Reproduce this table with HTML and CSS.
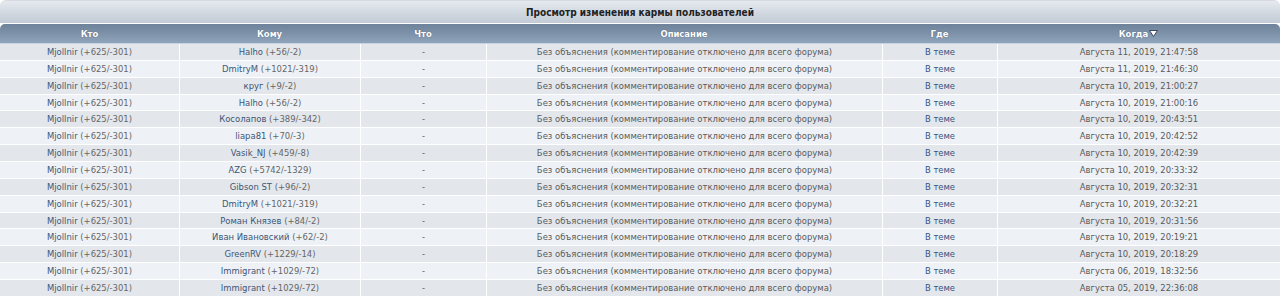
FILE: index.html
```html
<!DOCTYPE html>
<html lang="ru">
<head>
<meta charset="utf-8">
<title>Просмотр изменения кармы пользователей</title>
<link rel="stylesheet" href="styles.css">
</head>
<body>
<div class="panel">
  <div class="cap">Просмотр изменения кармы пользователей</div>
  <table class="karma">
    <colgroup>
      <col class="c1"><col class="c2"><col class="c3"><col class="c4"><col class="c5"><col class="c6">
    </colgroup>
    <thead>
      <tr>
        <th>Кто</th><th>Кому</th><th>Что</th><th>Описание</th><th>Где</th>
        <th>Когда<svg class="sort" width="9" height="7" viewBox="0 0 9 7"><path d="M0.5 0.5 H8.5 L4.5 6.5 Z" fill="#fff" stroke="#3a4a5e" stroke-width="1"/></svg></th>
      </tr>
    </thead>
    <tbody>
      <tr><td><a class="u">Mjollnir</a> <span class="n">(+625/-301)</span></td><td><a class="u">Halho</a> <span class="n">(+56/-2)</span></td><td class="d">-</td><td class="d">Без объяснения (комментирование отключено для всего форума)</td><td><a class="l">В теме</a></td><td class="d">Августа 11, 2019, 21:47:58</td></tr>
      <tr><td><a class="u">Mjollnir</a> <span class="n">(+625/-301)</span></td><td><a class="u">DmitryM</a> <span class="n">(+1021/-319)</span></td><td class="d">-</td><td class="d">Без объяснения (комментирование отключено для всего форума)</td><td><a class="l">В теме</a></td><td class="d">Августа 11, 2019, 21:46:30</td></tr>
      <tr><td><a class="u">Mjollnir</a> <span class="n">(+625/-301)</span></td><td><a class="u">круг</a> <span class="n">(+9/-2)</span></td><td class="d">-</td><td class="d">Без объяснения (комментирование отключено для всего форума)</td><td><a class="l">В теме</a></td><td class="d">Августа 10, 2019, 21:00:27</td></tr>
      <tr><td><a class="u">Mjollnir</a> <span class="n">(+625/-301)</span></td><td><a class="u">Halho</a> <span class="n">(+56/-2)</span></td><td class="d">-</td><td class="d">Без объяснения (комментирование отключено для всего форума)</td><td><a class="l">В теме</a></td><td class="d">Августа 10, 2019, 21:00:16</td></tr>
      <tr><td><a class="u">Mjollnir</a> <span class="n">(+625/-301)</span></td><td><a class="u">Косолапов</a> <span class="n">(+389/-342)</span></td><td class="d">-</td><td class="d">Без объяснения (комментирование отключено для всего форума)</td><td><a class="l">В теме</a></td><td class="d">Августа 10, 2019, 20:43:51</td></tr>
      <tr><td><a class="u">Mjollnir</a> <span class="n">(+625/-301)</span></td><td><a class="u">liapa81</a> <span class="n">(+70/-3)</span></td><td class="d">-</td><td class="d">Без объяснения (комментирование отключено для всего форума)</td><td><a class="l">В теме</a></td><td class="d">Августа 10, 2019, 20:42:52</td></tr>
      <tr><td><a class="u">Mjollnir</a> <span class="n">(+625/-301)</span></td><td><a class="u">Vasik_NJ</a> <span class="n">(+459/-8)</span></td><td class="d">-</td><td class="d">Без объяснения (комментирование отключено для всего форума)</td><td><a class="l">В теме</a></td><td class="d">Августа 10, 2019, 20:42:39</td></tr>
      <tr><td><a class="u">Mjollnir</a> <span class="n">(+625/-301)</span></td><td><a class="u">AZG</a> <span class="n">(+5742/-1329)</span></td><td class="d">-</td><td class="d">Без объяснения (комментирование отключено для всего форума)</td><td><a class="l">В теме</a></td><td class="d">Августа 10, 2019, 20:33:32</td></tr>
      <tr><td><a class="u">Mjollnir</a> <span class="n">(+625/-301)</span></td><td><a class="u">Gibson ST</a> <span class="n">(+96/-2)</span></td><td class="d">-</td><td class="d">Без объяснения (комментирование отключено для всего форума)</td><td><a class="l">В теме</a></td><td class="d">Августа 10, 2019, 20:32:31</td></tr>
      <tr><td><a class="u">Mjollnir</a> <span class="n">(+625/-301)</span></td><td><a class="u">DmitryM</a> <span class="n">(+1021/-319)</span></td><td class="d">-</td><td class="d">Без объяснения (комментирование отключено для всего форума)</td><td><a class="l">В теме</a></td><td class="d">Августа 10, 2019, 20:32:21</td></tr>
      <tr><td><a class="u">Mjollnir</a> <span class="n">(+625/-301)</span></td><td><a class="u">Роман Князев</a> <span class="n">(+84/-2)</span></td><td class="d">-</td><td class="d">Без объяснения (комментирование отключено для всего форума)</td><td><a class="l">В теме</a></td><td class="d">Августа 10, 2019, 20:31:56</td></tr>
      <tr><td><a class="u">Mjollnir</a> <span class="n">(+625/-301)</span></td><td><a class="u">Иван Ивановский</a> <span class="n">(+62/-2)</span></td><td class="d">-</td><td class="d">Без объяснения (комментирование отключено для всего форума)</td><td><a class="l">В теме</a></td><td class="d">Августа 10, 2019, 20:19:21</td></tr>
      <tr><td><a class="u">Mjollnir</a> <span class="n">(+625/-301)</span></td><td><a class="u">GreenRV</a> <span class="n">(+1229/-14)</span></td><td class="d">-</td><td class="d">Без объяснения (комментирование отключено для всего форума)</td><td><a class="l">В теме</a></td><td class="d">Августа 10, 2019, 20:18:29</td></tr>
      <tr><td><a class="u">Mjollnir</a> <span class="n">(+625/-301)</span></td><td><a class="u">Immigrant</a> <span class="n">(+1029/-72)</span></td><td class="d">-</td><td class="d">Без объяснения (комментирование отключено для всего форума)</td><td><a class="l">В теме</a></td><td class="d">Августа 06, 2019, 18:32:56</td></tr>
      <tr><td><a class="u">Mjollnir</a> <span class="n">(+625/-301)</span></td><td><a class="u">Immigrant</a> <span class="n">(+1029/-72)</span></td><td class="d">-</td><td class="d">Без объяснения (комментирование отключено для всего форума)</td><td><a class="l">В теме</a></td><td class="d">Августа 05, 2019, 22:36:08</td></tr>
    </tbody>
  </table>
</div>
</body>
</html>
```

FILE: styles.css
```css
html, body {
  margin: 0;
  padding: 0;
  background: #fff;
}
body {
  font-family: "DejaVu Sans Condensed", "DejaVu Sans", Verdana, sans-serif;
  font-stretch: condensed;
  font-size: 9.4px;
  color: #555;
}
.panel {
  width: 1280px;
}
.cap {
  height: 23px;
  line-height: 24px;
  text-align: center;
  font-weight: bold;
  font-size: 10px;
  color: #222;
  background: linear-gradient(to bottom, #e6eaef 0%, #d2d9e1 50%, #c2cbd5 100%);
  border-radius: 6px 6px 0 0;
  border-top: 1px solid #d5dbe2;
  box-sizing: border-box;
}
.karma {
  width: 100%;
  border-collapse: separate;
  border-spacing: 0;
  table-layout: fixed;
  margin-top: 1px;
}
.c1 { width: 179px; }
.c2 { width: 181px; }
.c3 { width: 126px; }
.c4 { width: 396px; }
.c5 { width: 115px; }
.c6 { width: 283px; }
.karma th {
  height: 19px;
  padding: 0;
  color: #fff;
  font-weight: bold;
  font-size: 9.4px;
  text-align: center;
  background: linear-gradient(to bottom, #6e839b 0%, #7d91a9 50%, #90a4bc 100%);
  border-bottom: 1px solid #c9d3de;
  text-shadow: 0 0 1px #4a5a70;
  white-space: nowrap;
}
.karma th:first-child { border-top-left-radius: 5px; }
.karma th:last-child { border-top-right-radius: 5px; }
.sort {
  vertical-align: middle;
  margin-left: 1px;
  position: relative;
  top: -1px;
}
.karma td {
  padding: 1px 0;
  line-height: 13.86px;
  text-align: center;
  white-space: nowrap;
  overflow: hidden;
  border-bottom: 1px solid #fff;
  border-left: 1px solid #fff;
}
.karma td:first-child { border-left: 0; }
.karma tbody tr:nth-child(odd) td { background: #e3e7ec; }
.karma tbody tr:nth-child(even) td { background: #eef2f6; }
.u { color: #3d5575; text-decoration: none; }
.n { color: #666; }
.d { color: #5a5a5a; }
.l { color: #355281; text-decoration: none; }
```
